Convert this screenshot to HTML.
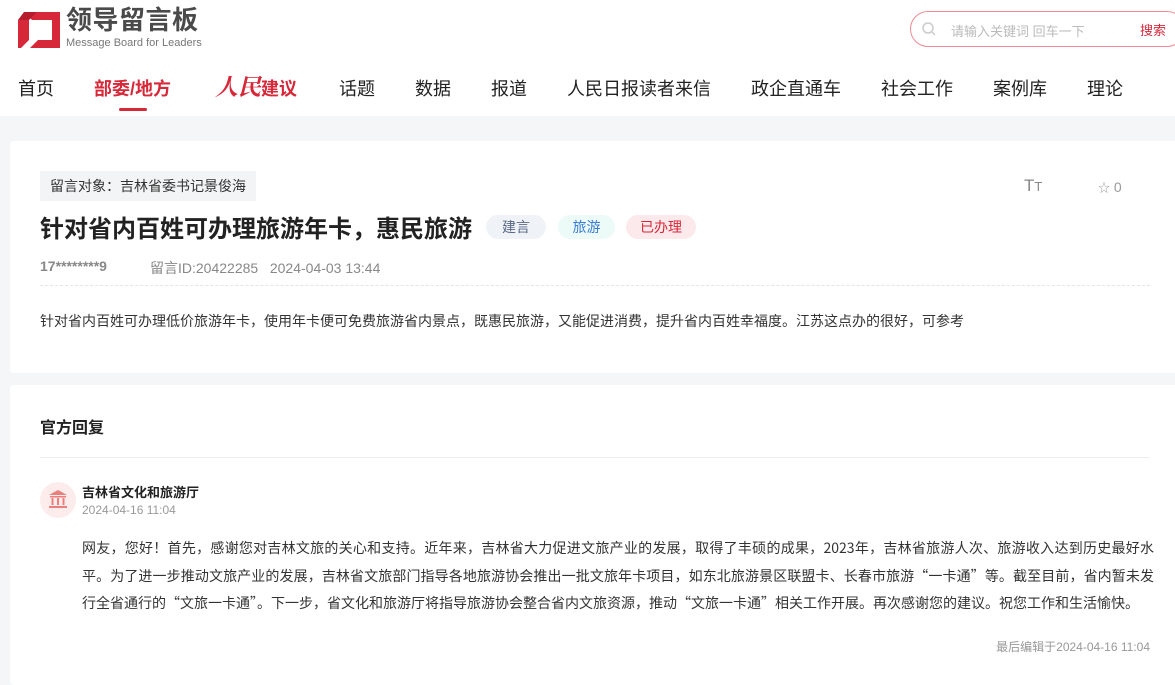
<!DOCTYPE html>
<html><head><meta charset="utf-8"><style>
*{margin:0;padding:0;box-sizing:border-box}
body{width:1175px;height:669px;overflow:hidden;background:#f5f6f8;font-family:"Liberation Sans","Noto Sans CJK SC",sans-serif;position:relative;color:#222}
.a{position:absolute;white-space:nowrap}
.hdr{position:absolute;left:0;top:0;width:1175px;height:116px;background:#fff}
.nav{font-size:18px;color:#222;top:75px}
.card{position:absolute;background:#fff;border-radius:4px}
.tag{position:absolute;top:215px;height:24px;border-radius:12px;font-size:14px;line-height:24px;text-align:center}
</style></head><body>
<div class="hdr"></div>
<svg class="a" style="left:18px;top:12px" width="42" height="36" viewBox="0 0 42 36"><path d="M6 0H42V36H12L20 28H34V8H14Z" fill="#d7283a"/><path d="M0 8H11V28L3 36H0Z" fill="#d7283a"/><path d="M11 8L19 0H6L0 8Z" fill="#b51d2c"/></svg>
<div class="a" style="left:66px;top:4px;font-size:26px;line-height:32px;font-weight:bold;color:#4a4a4a;letter-spacing:0.5px">领导留言板</div>
<div class="a" style="left:66px;top:37px;font-size:11px;line-height:12px;color:#777">Message Board for Leaders</div>
<div class="a" style="left:910px;top:11px;width:275px;height:36px;border:1px solid #f08a94;border-radius:18px"></div>
<svg class="a" style="left:922px;top:22px" width="14" height="14" viewBox="0 0 14 14"><circle cx="6" cy="6" r="5" fill="none" stroke="#ccc" stroke-width="1.5"/><path d="M10 10L13 13" stroke="#ccc" stroke-width="1.5"/></svg>
<div class="a" style="left:951px;top:21px;font-size:13px;color:#bbb">请输入关键词 回车一下</div>
<div class="a" style="left:1140px;top:20px;font-size:13px;color:#d7283a">搜索</div>
<div class="a nav" style="left:18px">首页</div>
<div class="a nav" style="left:94px;color:#d7283a;font-weight:bold">部委/地方</div>
<div class="a" style="left:119px;top:108px;width:28px;height:3px;background:#d7283a;border-radius:2px"></div>
<div class="a nav" style="left:215px;top:69px;color:#d7283a;font-weight:bold;font-size:23px;font-style:italic;font-family:'Noto Serif CJK SC',serif">人民<span style="font-style:normal;font-size:18px;font-family:'Noto Sans CJK SC',sans-serif">建议</span></div>
<div class="a nav" style="left:339px">话题</div>
<div class="a nav" style="left:415px">数据</div>
<div class="a nav" style="left:491px">报道</div>
<div class="a nav" style="left:567px">人民日报读者来信</div>
<div class="a nav" style="left:751px">政企直通车</div>
<div class="a nav" style="left:881px">社会工作</div>
<div class="a nav" style="left:993px">案例库</div>
<div class="a nav" style="left:1087px">理论</div>

<div class="card" style="left:10px;top:141px;width:1175px;height:232px"></div>
<div class="a" style="left:40px;top:171px;height:30px;padding:0 10px;background:#f3f4f6;font-size:14px;line-height:30px;color:#333">留言对象：吉林省委书记景俊海</div>
<div class="a" style="left:1024px;top:176px;font-size:17px;color:#888">T<span style="font-size:13px">T</span></div>
<div class="a" style="left:1098px;top:179px;font-size:14px;color:#999"><span style="font-size:12px">☆</span> 0</div>
<div class="a" style="left:40px;top:209px;font-size:24px;font-weight:bold;color:#222">针对省内百姓可办理旅游年卡，惠民旅游</div>
<div class="tag" style="left:486px;width:60px;background:#eff2f7;color:#5a6a85">建言</div>
<div class="tag" style="left:558px;width:57px;background:#ecfaf8;color:#3a7bd5">旅游</div>
<div class="tag" style="left:626px;width:70px;background:#fbe9eb;color:#d7283a">已办理</div>
<div class="a" style="left:40px;top:258px;font-size:14px;color:#888;font-weight:bold">17********9</div>
<div class="a" style="left:150px;top:258px;font-size:14px;color:#888">留言ID:20422285&nbsp;&nbsp;&nbsp;2024-04-03 13:44</div>
<div class="a" style="left:40px;top:285px;width:1110px;border-top:1px dashed #e5e5e5"></div>
<div class="a" style="left:40px;top:311px;font-size:14px;color:#333">针对省内百姓可办理低价旅游年卡，使用年卡便可免费旅游省内景点，既惠民旅游，又能促进消费，提升省内百姓幸福度。江苏这点办的很好，可参考</div>

<div class="card" style="left:10px;top:385px;width:1175px;height:300px"></div>
<div class="a" style="left:40px;top:414px;font-size:16px;font-weight:bold;color:#222">官方回复</div>
<div class="a" style="left:40px;top:457px;width:1110px;border-top:1px solid #eee"></div>
<div class="a" style="left:40px;top:482px;width:36px;height:36px;border-radius:18px;background:#fdecec"></div>
<svg class="a" style="left:48px;top:489px" width="20" height="20" viewBox="0 0 20 20" fill="#e9807d"><path d="M10 1L19 6H1Z"/><rect x="2" y="7" width="16" height="1.5"/><rect x="3.5" y="9" width="2" height="7"/><rect x="9" y="9" width="2" height="7"/><rect x="14.5" y="9" width="2" height="7"/><rect x="1" y="17" width="18" height="2"/></svg>
<div class="a" style="left:82px;top:482px;font-size:13px;font-weight:bold;color:#222">吉林省文化和旅游厅</div>
<div class="a" style="left:82px;top:503px;font-size:12px;color:#999">2024-04-16 11:04</div>
<div class="a" style="left:82px;top:535px;width:1072px;white-space:normal;font-family:'Noto Sans CJK SC',sans-serif;font-size:14px;line-height:27.5px;color:#333;text-align:justify">网友，您好！首先，感谢您对吉林文旅的关心和支持。近年来，吉林省大力促进文旅产业的发展，取得了丰硕的成果，2023年，吉林省旅游人次、旅游收入达到历史最好水平。为了进一步推动文旅产业的发展，吉林省文旅部门指导各地旅游协会推出一批文旅年卡项目，如东北旅游景区联盟卡、长春市旅游“一卡通”等。截至目前，省内暂未发行全省通行的“文旅一卡通”。下一步，省文化和旅游厅将指导旅游协会整合省内文旅资源，推动“文旅一卡通”相关工作开展。再次感谢您的建议。祝您工作和生活愉快。</div>
<div class="a" style="right:25px;top:638px;font-size:12px;color:#999">最后编辑于2024-04-16 11:04</div>
</body></html>
